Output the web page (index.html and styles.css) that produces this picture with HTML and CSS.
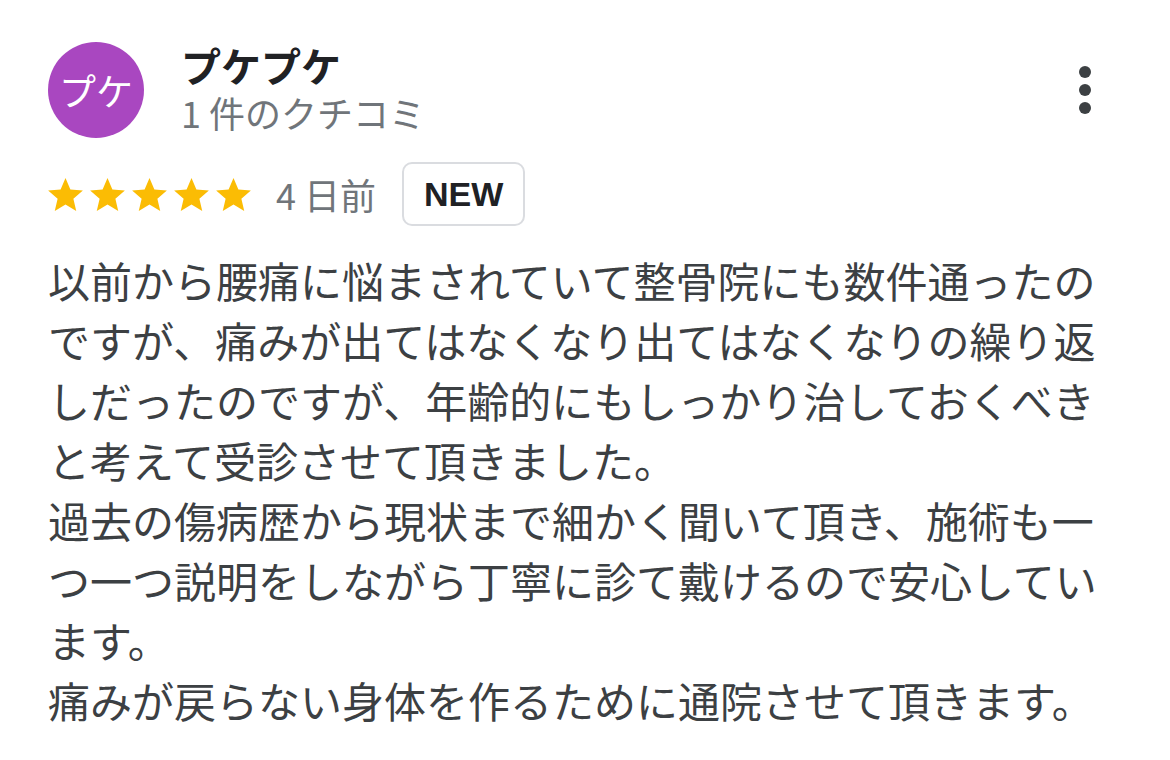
FILE: index.html
```html
<!DOCTYPE html>
<html lang="ja">
<head>
<meta charset="UTF-8" />
<meta name="viewport" content="width=device-width, initial-scale=1" />
<title>クチコミ</title>
<link rel="stylesheet" href="styles.css">
</head>
<body>
<article class="review">
  <!-- 投稿者 -->
  <div class="review-head">
    <div class="avatar">プケ</div>
    <div class="author">
      <div class="author-name">プケプケ</div>
      <div class="author-count">1 件のクチコミ</div>
    </div>
    <button class="kebab" aria-label="メニュー">
      <span></span><span></span><span></span>
    </button>
  </div>

  <!-- 評価と日付 -->
  <div class="review-meta">
    <div class="stars">
      <svg viewBox="2 2 20 19"><path d="M12 17.27L18.18 21l-1.64-7.03L22 9.24l-7.19-.61L12 2 9.19 8.63 2 9.24l5.46 4.73L5.82 21z"/></svg>
      <svg viewBox="2 2 20 19"><path d="M12 17.27L18.18 21l-1.64-7.03L22 9.24l-7.19-.61L12 2 9.19 8.63 2 9.24l5.46 4.73L5.82 21z"/></svg>
      <svg viewBox="2 2 20 19"><path d="M12 17.27L18.18 21l-1.64-7.03L22 9.24l-7.19-.61L12 2 9.19 8.63 2 9.24l5.46 4.73L5.82 21z"/></svg>
      <svg viewBox="2 2 20 19"><path d="M12 17.27L18.18 21l-1.64-7.03L22 9.24l-7.19-.61L12 2 9.19 8.63 2 9.24l5.46 4.73L5.82 21z"/></svg>
      <svg viewBox="2 2 20 19"><path d="M12 17.27L18.18 21l-1.64-7.03L22 9.24l-7.19-.61L12 2 9.19 8.63 2 9.24l5.46 4.73L5.82 21z"/></svg>
    </div>
    <span class="review-date">4 日前</span>
    <span class="badge-new">NEW</span>
  </div>

  <!-- 本文 -->
  <p class="review-text">以前から腰痛に悩まされていて整骨院にも数件通ったのですが、痛みが出てはなくなり出てはなくなりの繰り返しだったのですが、年齢的にもしっかり治しておくべきと考えて受診させて頂きました。<br>過去の傷病歴から現状まで細かく聞いて頂き、施術も一つ一つ説明をしながら丁寧に診て戴けるので安心しています。<br>痛みが戻らない身体を作るために通院させて頂きます。</p>
</article>
</body>
</html>
```

FILE: styles.css
```css
body {
  margin: 0;
  background: #fff;
  font-family: "Noto Sans CJK JP", sans-serif;
  color: #3c4043;
}
.review {
  padding: 42px 62px 0 48px;
}

/* 投稿者 */
.review-head {
  display: flex;
  align-items: flex-start;
}
.avatar {
  width: 96px;
  height: 96px;
  border-radius: 50%;
  background: #a947c0;
  color: #fff;
  font-size: 37px;
  display: flex;
  align-items: center;
  justify-content: center;
  flex-shrink: 0;
}
.author {
  flex: 1;
  margin-left: 37px;
}
.author-name {
  font-size: 40px;
  font-weight: bold;
  line-height: 47px;
  color: #202124;
}
.author-count {
  font-size: 36px;
  line-height: 46px;
  color: #70757a;
}
.kebab {
  display: flex;
  flex-direction: column;
  gap: 6px;
  margin: 24px 17px 0 0;
  padding: 0;
  border: none;
  background: none;
}
.kebab span {
  width: 12px;
  height: 12px;
  border-radius: 50%;
  background: #3c4043;
}

/* 評価 */
.review-meta {
  display: flex;
  align-items: center;
  margin-top: 24px;
}
.stars {
  display: flex;
  gap: 7px;
}
.stars svg {
  width: 35px;
  height: 33px;
  fill: #fbbc04;
}
.review-date {
  margin-left: 25px;
  font-size: 36px;
  color: #70757a;
}
.badge-new {
  margin-left: 26px;
  padding: 0 20px;
  line-height: 60px;
  border: 2px solid #dadce0;
  border-radius: 10px;
  font-family: "Liberation Sans", Arial, sans-serif;
  font-weight: bold;
  font-size: 34px;
  color: #202124;
}

/* 本文 */
.review-text {
  margin: 24px 0 0;
  font-size: 42px;
  line-height: 60px;
}
```
